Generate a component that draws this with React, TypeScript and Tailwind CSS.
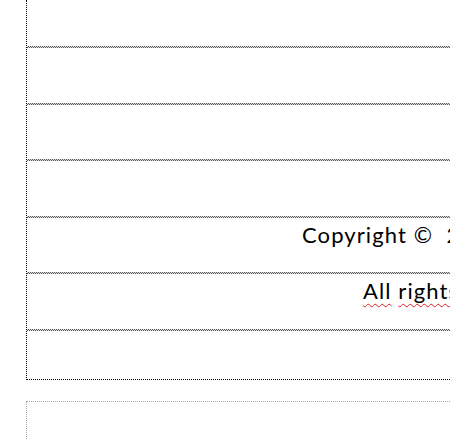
// Word-style table with dotted gridlines, clipped at the right edge
const Rule = () => (
  <div className="h-[2px] w-full bg-[conic-gradient(#5a5a5a_25%,#dcdcdc_0_50%,#5a5a5a_0_75%,#dcdcdc_0)] bg-[length:2px_2px]" />
);

const Squiggle = ({ children }: { children: string }) => (
  <span className="underline decoration-wavy decoration-[#e02020] decoration-1 underline-offset-[4px] [text-decoration-skip-ink:none]">
    {children}
  </span>
);

export default function App() {
  const font = { fontFamily: 'Lato, "Noto Sans", sans-serif' };

  return (
    <div className="h-[439px] w-[450px] overflow-hidden bg-white" style={font}>
      <div className="ml-[26px] w-[600px] border-l border-dotted border-black">
        <div className="h-[46px]" />
        <Rule />
        <div className="h-[55px]" />
        <Rule />
        <div className="h-[54px]" />
        <Rule />
        <div className="h-[55px]" />
        <Rule />
        <div className="h-[54px] pl-[275px] pt-[4px] text-[22px] leading-[26px] tracking-[1.1px] whitespace-nowrap text-black">
          Copyright ©&nbsp; 2024 Company Name.
        </div>
        <Rule />
        <div className="h-[55px] pl-[336px] pt-[4px] text-[22px] leading-[26px] tracking-[1.1px] whitespace-nowrap text-black">
          <Squiggle>All</Squiggle> <Squiggle>rights</Squiggle> reserved.
        </div>
        <Rule />
        <div className="h-[49px] border-b border-dotted border-black" />
      </div>
      <div className="ml-[26px] mt-[21px] h-[60px] w-[600px] border-l border-t border-dotted border-[#a8a8a8]" />
    </div>
  );
}
